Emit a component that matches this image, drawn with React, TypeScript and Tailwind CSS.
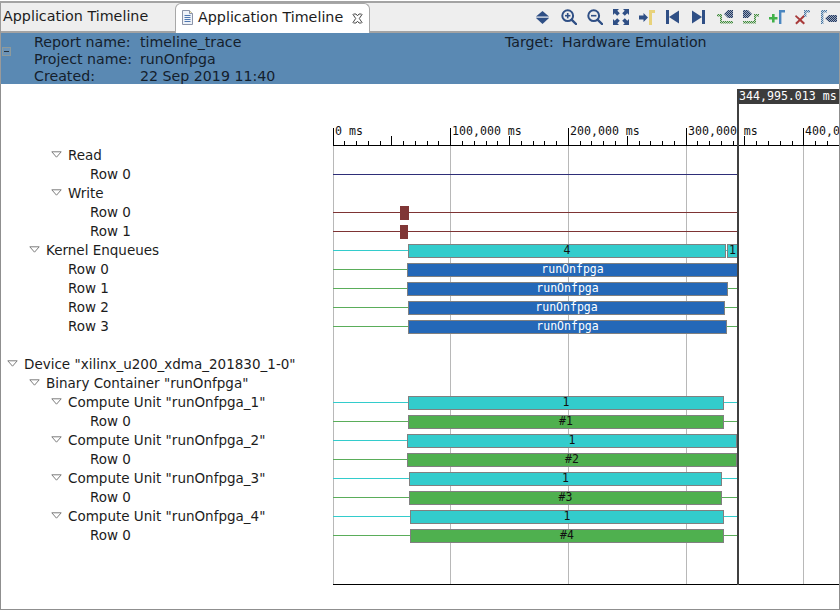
import type { ReactNode } from "react";

const NAVY = "#2f4f85";
const TREE_FONT = "font-['DejaVu_Sans',sans-serif]";
const MONO_FONT = "font-['DejaVu_Sans_Mono',monospace]";

type Bar = { left: number; right: number; color: string; label: string; text?: string };
type Row = {
  label: string;
  depth: number;
  open?: boolean;
  line?: string;
  bars?: Bar[];
};

const CYAN = "#33cccc";
const GREEN = "#5aad5a";
const GREEN_BAR = "#4fb04f";
const BLUE_BAR = "#2468b8";
const WHITE = "#ffffff";

function cu(name: string, left: number, right: number, tag: string): Row[] {
  return [
    {
      label: `Compute Unit "${name}"`,
      depth: 2,
      open: true,
      line: CYAN,
      bars: [{ left, right, color: CYAN, label: "1" }],
    },
    {
      label: "Row 0",
      depth: 3,
      line: GREEN,
      bars: [{ left, right, color: GREEN_BAR, label: tag }],
    },
  ];
}

const rows: Row[] = [
  { label: "Read", depth: 2, open: true },
  { label: "Row 0", depth: 3, line: "#2e2e78" },
  { label: "Write", depth: 2, open: true },
  { label: "Row 0", depth: 3, line: "#7e3434" },
  { label: "Row 1", depth: 3, line: "#7e3434" },
  {
    label: "Kernel Enqueues",
    depth: 1,
    open: true,
    line: CYAN,
    bars: [
      { left: 408, right: 726, color: CYAN, label: "4" },
      { left: 727, right: 738, color: CYAN, label: "1" },
    ],
  },
  {
    label: "Row 0",
    depth: 2,
    line: GREEN,
    bars: [{ left: 407, right: 738, color: BLUE_BAR, label: "runOnfpga", text: WHITE }],
  },
  {
    label: "Row 1",
    depth: 2,
    line: GREEN,
    bars: [{ left: 407, right: 728, color: BLUE_BAR, label: "runOnfpga", text: WHITE }],
  },
  {
    label: "Row 2",
    depth: 2,
    line: GREEN,
    bars: [{ left: 408, right: 725, color: BLUE_BAR, label: "runOnfpga", text: WHITE }],
  },
  {
    label: "Row 3",
    depth: 2,
    line: GREEN,
    bars: [{ left: 408, right: 727, color: BLUE_BAR, label: "runOnfpga", text: WHITE }],
  },
  { label: "", depth: 0 },
  { label: 'Device "xilinx_u200_xdma_201830_1-0"', depth: 0, open: true },
  { label: 'Binary Container "runOnfpga"', depth: 1, open: true },
  ...cu("runOnfpga_1", 408, 724, "#1"),
  ...cu("runOnfpga_2", 407, 737, "#2"),
  ...cu("runOnfpga_3", 409, 722, "#3"),
  ...cu("runOnfpga_4", 410, 724, "#4"),
];

// write blocks sit on the two Write rows, x in page pixels
const blocks: Record<number, [number, number]> = {
  3: [400, 409],
  4: [400, 408],
};

const ORIGIN = 333;
const MAJOR = 117.7;
const CURSOR = 737;

function Icon({ children }: { children: ReactNode }) {
  return (
    <svg width="16" height="16" viewBox="0 0 16 16" className="block shrink-0">
      {children}
    </svg>
  );
}

function Dither() {
  return (
    <defs>
      <pattern id="dNavy" width="2" height="2" patternUnits="userSpaceOnUse">
        <rect width="2" height="2" fill="#9aa7bd" />
        <rect width="1" height="1" fill="#24395f" />
        <rect x="1" y="1" width="1" height="1" fill="#24395f" />
      </pattern>
      <pattern id="dGreen" width="2" height="2" patternUnits="userSpaceOnUse">
        <rect width="2" height="2" fill="#c4d8be" />
        <rect width="1" height="1" fill="#3f8a3f" />
        <rect x="1" y="1" width="1" height="1" fill="#3f8a3f" />
      </pattern>
      <pattern id="dBlue" width="2" height="2" patternUnits="userSpaceOnUse">
        <rect width="2" height="2" fill="#c3d3e4" />
        <rect width="1" height="1" fill="#48769f" />
        <rect x="1" y="1" width="1" height="1" fill="#48769f" />
      </pattern>
    </defs>
  );
}

function Magnifier({ plus }: { plus?: boolean }) {
  return (
    <Icon>
      <circle cx="6.7" cy="6.7" r="5.4" fill="none" stroke={NAVY} strokeWidth="2" />
      <path d="M4 6.7h5.4" stroke={NAVY} strokeWidth="1.6" />
      {plus && <path d="M6.7 4v5.4" stroke={NAVY} strokeWidth="1.6" />}
      <path d="M10.8 10.8L15 15" stroke={NAVY} strokeWidth="2.4" strokeLinecap="round" />
    </Icon>
  );
}

const toolbar: ReactNode[] = [
  <Icon key="updown">
    <path d="M7.5 2L14 7.5H1z" fill={NAVY} />
    <path d="M1 9H14L7.5 15z" fill={NAVY} />
    <path d="M1 8.2h13" stroke="#8fa3c4" strokeWidth="0.8" />
  </Icon>,
  <Magnifier key="in" plus />,
  <Magnifier key="out" />,
  <Icon key="fit">
    <path d="M0 0h6L4.3 1.7 6.8 4.2 4.2 6.8 1.7 4.3 0 6z" fill={NAVY} />
    <path d="M16 0v6L14.3 4.3 11.8 6.8 9.2 4.2 11.7 1.7 10 0z" fill={NAVY} />
    <path d="M0 16v-6l1.7 1.7 2.5-2.5 2.6 2.6-2.5 2.5L6 16z" fill={NAVY} />
    <path d="M16 16h-6l1.7-1.7-2.5-2.5 2.6-2.6 2.5 2.5L16 10z" fill={NAVY} />
  </Icon>,
  <Icon key="goto">
    <path d="M0 6.5h4.5V4L9 8.5 4.5 13v-2.5H0z" fill={NAVY} />
    <path d="M10 16V1h6v3h-3v12z" fill="#e8d27a" />
  </Icon>,
  <Icon key="first">
    <path d="M1 1h3v14H1z" fill={NAVY} />
    <path d="M14 1.5v13L4 8z" fill={NAVY} />
  </Icon>,
  <Icon key="last">
    <path d="M1 1.5v13L11 8z" fill={NAVY} />
    <path d="M11 1h3v14h-3z" fill={NAVY} />
  </Icon>,
  <Icon key="risePrev">
    <path d="M0 5h5v7h11v2.5H3V7.5H0z" fill="url(#dGreen)" />
    <path d="M7 5l4-4h5v8H11z" fill="url(#dNavy)" />
  </Icon>,
  <Icon key="riseNext">
    <path d="M16 5h-5v7H0v2.5h13V7.5h3z" fill="url(#dGreen)" />
    <path d="M9 5L5 1H0v8h5z" fill="url(#dNavy)" />
  </Icon>,
  <Icon key="add">
    <path d="M3 5h2.6v3H8.5v2.6H5.6v3H3v-3H0V8h3z" fill="#41b14a" />
    <path d="M10 15V1h6v2.4h-3.6V15z" fill="#4a86c0" />
  </Icon>,
  <Icon key="remove">
    <path d="M1 6l4 3.4L8.5 6 10 7.4 6.5 10.8 10 14l-1.4 1.4L5 12.2 1.6 15.4 0.2 14l3.4-3.2L0 7.4z" fill="#a83a3a" />
    <path d="M9 8V1h6v2.4h-3.6V8z" fill="url(#dBlue)" />
  </Icon>,
  <Icon key="back">
    <path d="M0 15V1h6v2.4H2.4V15z" fill="url(#dBlue)" />
    <path d="M4 9.5L8 6h8v7H8z" fill="url(#dNavy)" />
  </Icon>,
];

function Twisty() {
  return (
    <svg width="11" height="7" viewBox="0 0 11 7" className="block">
      <path d="M0.8 0.8H10.2L5.5 6.2z" fill="#ffffff" stroke="#7d7d7d" strokeWidth="1" />
    </svg>
  );
}

function TreeRow({ row }: { row: Row }) {
  return (
    <div
      className="relative flex h-[19px] items-center text-[13.5px] whitespace-nowrap text-[#1c1c1c]"
      style={{ paddingLeft: 23 + row.depth * 22 }}
    >
      {row.open && (
        <span className="absolute top-[5px]" style={{ left: 6 + row.depth * 22 }}>
          <Twisty />
        </span>
      )}
      {row.label}
    </div>
  );
}

function TimelineRow({ row, index }: { row: Row; index: number }) {
  const block = blocks[index];
  return (
    <div className="relative h-[19px]">
      {row.line && (
        <div
          className="absolute top-[9px] left-0 h-px"
          style={{ width: CURSOR - ORIGIN, backgroundColor: row.line }}
        />
      )}
      {block && (
        <div
          className="absolute top-[3px] h-[14px] bg-[#803636]"
          style={{ left: block[0] - ORIGIN, width: block[1] - block[0] }}
        />
      )}
      {row.bars?.map((b) => (
        <div
          key={b.left}
          className={`absolute top-[3px] box-border flex h-[14px] items-center justify-center border border-[#808080] text-[11.5px] ${MONO_FONT}`}
          style={{
            left: b.left - ORIGIN,
            width: b.right - b.left,
            backgroundColor: b.color,
            color: b.text ?? "#111111",
          }}
        >
          {b.label}
        </div>
      ))}
    </div>
  );
}

function Ruler() {
  const labels = ["0 ms", "100,000 ms", "200,000 ms", "300,000 ms", "400,000 ms"];
  const ticks = Array.from({ length: 44 }, (_, i) => i);
  return (
    <div className={`relative h-[62px] shrink-0 text-[11.6px] text-[#111111] ${MONO_FONT}`}>
      {labels.map((t, i) => (
        <span
          key={t}
          className="absolute top-[40px] leading-[14px] whitespace-nowrap"
          style={{ left: Math.floor(i * MAJOR) + 2 }}
        >
          {t}
        </span>
      ))}
      {ticks.map((i) => {
        const h = i % 10 === 0 ? 17 : i % 5 === 0 ? 9 : 4;
        return (
          <div
            key={i}
            className="absolute w-px bg-black"
            style={{ left: Math.floor((i * MAJOR) / 10), top: 61 - h, height: h }}
          />
        );
      })}
      <div className="absolute right-0 bottom-0 left-0 h-px bg-black" />
    </div>
  );
}

export default function App() {
  return (
    <div className={`flex h-[610px] w-[840px] flex-col overflow-hidden bg-white ${TREE_FONT}`}>
      <div className="mt-px h-[2px] shrink-0 bg-[#a3a3a3]" />

      {/* Tabs and toolbar */}
      <div className="relative flex h-[30px] shrink-0 items-stretch border-l border-[#9a9a9a] bg-[#eeeeee]">
        <div className="absolute right-0 bottom-0 left-0 h-[2px] bg-[#a3a3a3]" />
        <div className="flex w-[174px] items-center pb-[2px] pl-[2px] text-[14.3px] text-[#1c1c1c]">
          Application Timeline
        </div>
        <div className="relative flex w-[195px] items-center rounded-t-md border border-b-0 border-[#a8a8a8] bg-white pb-[2px] pl-[6px] text-[14.3px] text-[#1c1c1c]">
          <svg width="11" height="15" viewBox="0 0 11 15" className="mr-[5px] block shrink-0">
            <path d="M0.5 0.5H7.5L10.5 3.5V14.5H0.5z" fill="#eef2f8" stroke="#8a93a8" />
            <path d="M7.5 0.5V3.5H10.5" fill="#f6e9b0" stroke="#8a93a8" />
            <path d="M2.5 5.5h6M2.5 7.5h6M2.5 9.5h6M2.5 11.5h6" stroke="#4f77b0" />
          </svg>
          Application Timeline
          <svg width="11" height="11" viewBox="0 0 11 11" className="absolute top-[9px] left-[176px] block">
            <path
              d="M1.5 1H4L5.5 2.8 7 1H9.5L10 1.5 7.3 5.5 10 9.5 9.5 10H7L5.5 8.2 4 10H1.5L1 9.5 3.7 5.5 1 1.5z"
              fill="#ffffff"
              stroke="#4a4a4a"
              strokeWidth="1"
            />
          </svg>
        </div>
        <div className="relative ml-auto flex items-center gap-[10px] pr-[3px] pb-[2px]">
          <svg width="0" height="0" className="absolute">
            <Dither />
          </svg>
          {toolbar}
        </div>
      </div>

      {/* Report summary */}
      <div className="flex h-[51px] shrink-0 items-start border-x border-[#9a9a9a] bg-[#5a89b3] text-[14.2px] leading-[17px] text-[#14202c]">
        <div className="mt-[14px] ml-px box-border flex h-[9px] w-[9px] items-center justify-center border border-[#8d9a9c] bg-[#6c94b8]">
          <div className="h-px w-[5px] bg-[#26323c]" />
        </div>
        <div className="mt-px ml-[23px] grid w-[471px] grid-cols-[106px_1fr]">
          <span>Report name:</span>
          <span>timeline_trace</span>
          <span>Project name:</span>
          <span>runOnfpga</span>
          <span>Created:</span>
          <span>22 Sep 2019 11:40</span>
        </div>
        <div className="mt-px flex">
          <span className="w-[57px]">Target:</span>
          <span>Hardware Emulation</span>
        </div>
      </div>

      {/* Tree and timeline */}
      <div className="flex min-h-0 flex-1 border-x border-b border-[#8f8f8f]">
        <div className="w-[332px] shrink-0 pt-[62px]">
          {rows.map((r, i) => (
            <TreeRow key={i} row={r} />
          ))}
        </div>
        <div className="relative flex min-w-0 flex-1 flex-col overflow-hidden">
          <Ruler />
          <div className="relative h-[439px] shrink-0 border-b border-black">
            {[0, 1, 2, 3, 4].map((i) => (
              <div
                key={i}
                className="absolute top-0 bottom-0 w-px bg-[#b8b8b8]"
                style={{ left: Math.floor(i * MAJOR) }}
              />
            ))}
            {rows.map((r, i) => (
              <TimelineRow key={i} row={r} index={i} />
            ))}
          </div>

          {/* Time cursor */}
          <div
            className="absolute top-[20px] h-[481px] w-[2px] bg-[#404040]"
            style={{ left: CURSOR - ORIGIN }}
          />
          <div
            className={`absolute top-[5px] flex h-[15px] items-center bg-[#3c3c3c] pl-[2px] text-[11.6px] whitespace-nowrap text-white ${MONO_FONT}`}
            style={{ left: CURSOR - ORIGIN, right: 0 }}
          >
            344,995.013 ms
          </div>
        </div>
      </div>
    </div>
  );
}
